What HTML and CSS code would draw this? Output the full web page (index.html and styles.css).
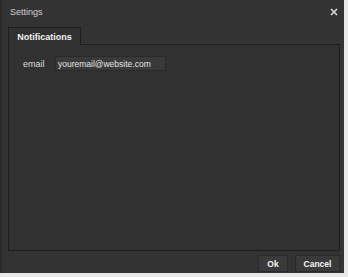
FILE: index.html
```html
<!DOCTYPE html>
<html>
<head>
<meta charset="utf-8">
<link rel="stylesheet" href="styles.css">
</head>
<body>
<div class="dialog">
  <div class="titlebar">
    <span class="title">Settings</span>
    <svg class="close" width="8" height="8" viewBox="0 0 8 8"><path d="M1 1L7 7M7 1L1 7" stroke="#d8d8d8" stroke-width="1.6" fill="none"/></svg>
  </div>
  <div class="tabs">
    <div class="tab">Notifications</div>
  </div>
  <div class="panel">
    <div class="row">
      <label class="label">email</label>
      <div class="input">youremail@website.com</div>
    </div>
  </div>
  <div class="footer">
    <button class="btn btn-ok">Ok</button>
    <button class="btn btn-cancel">Cancel</button>
  </div>
</div>
</body>
</html>
```
FILE: styles.css
```css
html, body {
  margin: 0;
  padding: 0;
  background: #e8e8e8;
}
body {
  width: 348px;
  height: 277px;
  font-family: "Liberation Sans", Arial, sans-serif;
}
.dialog {
  width: 344px;
  height: 273px;
  box-sizing: border-box;
  background: #333333;
  border-left: 2px solid #2a2a2a;
  display: flex;
  flex-direction: column;
}
.titlebar {
  height: 27px;
  display: flex;
  align-items: center;
  justify-content: space-between;
  padding: 0 6px 4px 8px;
  box-sizing: border-box;
}
.title {
  font-size: 9px;
  color: #cfcfcf;
}
.close {
  display: block;
}
.tabs {
  display: flex;
  padding-left: 6px;
  height: 17px;
  position: relative;
  z-index: 1;
}
.tab {
  width: 73px;
  box-sizing: border-box;
  border: 1px solid #1e1e1e;
  border-bottom: none;
  background: #313131;
  color: #f4f4f4;
  font-weight: bold;
  font-size: 9px;
  display: flex;
  align-items: center;
  justify-content: center;
  height: 18px;
}
.panel {
  margin: 0 4px 0 6px;
  height: 207px;
  box-sizing: border-box;
  border: 1px solid #1e1e1e;
  background: #313131;
  padding: 11px 0 0 14px;
}
.row {
  display: flex;
  align-items: center;
}
.label {
  font-size: 9px;
  color: #dcdcdc;
  width: 32px;
}
.input {
  width: 111px;
  height: 15px;
  box-sizing: border-box;
  background: #393939;
  border: 1px solid #2a2a2a;
  font-size: 8.5px;
  color: #e4e4e4;
  padding-left: 2px;
  display: flex;
  align-items: center;
}
.footer {
  display: flex;
  justify-content: flex-end;
  gap: 7px;
  padding: 4px 4px 0 0;
}
.btn {
  height: 17px;
  box-sizing: border-box;
  background: #3a3a3a;
  border: 1px solid #2a2a2a;
  color: #f4f4f4;
  font-family: "Liberation Sans", Arial, sans-serif;
  font-weight: bold;
  font-size: 8.5px;
  padding: 0;
}
.btn-ok { width: 30px; }
.btn-cancel { width: 45px; }
```
